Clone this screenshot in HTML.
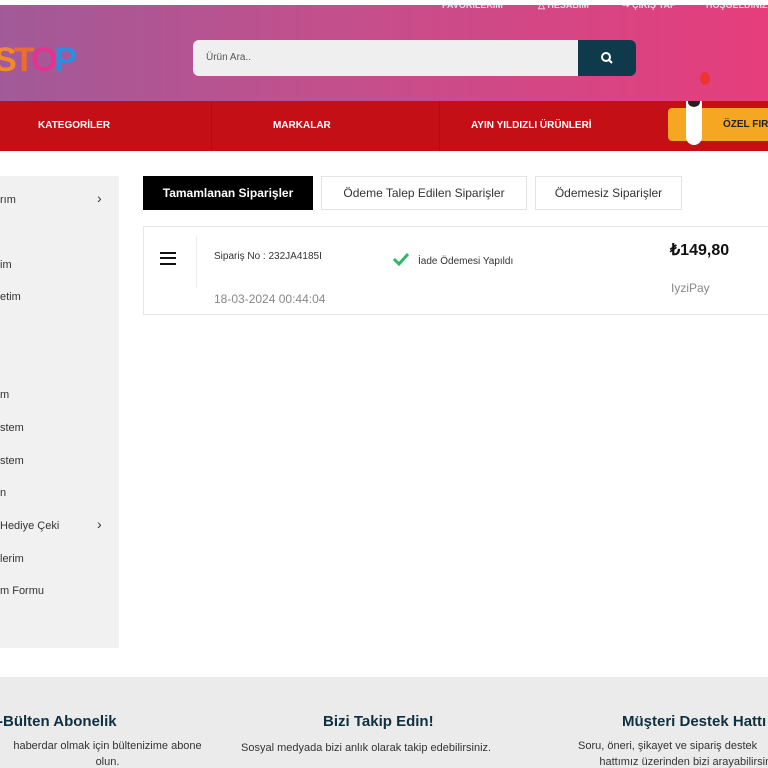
<!DOCTYPE html><html><head><meta charset="utf-8"><style>
*{margin:0;padding:0;box-sizing:border-box}
html,body{width:768px;height:768px;overflow:hidden}
body{background:#fff;font-family:"Liberation Sans",sans-serif;color:#222}
#w{position:relative;width:768px;height:768px;overflow:hidden}
.a{position:absolute;white-space:nowrap}
.hdr{position:absolute;left:0;top:5px;width:768px;height:96px;overflow:hidden;background:linear-gradient(90deg,#a15a98 0%,#c44f8c 45%,#e63d7c 100%)}
.nav{position:absolute;left:0;top:101px;width:768px;height:50px;overflow:hidden;background:#c40f16}
.nav .a{color:#fff;font-weight:bold;font-size:10px;top:19px}
.sep{position:absolute;top:0;width:1px;height:50px;background:#b00c12}
.side{position:absolute;left:0;top:176px;width:119px;height:472px;background:#f1f1f1}
.side .a{font-size:11px;color:#333;left:0}
.tab{position:absolute;top:176px;height:34px;border:1px solid #e4e4e4;font-size:12px;text-align:center;line-height:32px;color:#333}
.foot{position:absolute;left:0;top:677px;width:768px;height:91px;overflow:hidden;background:#ebebeb}
.foot h3{position:absolute;font-size:15px;color:#0e3040;white-space:nowrap}
.foot p{position:absolute;font-size:11px;color:#333;text-align:center;line-height:16px;white-space:nowrap}
</style></head><body><div id="w">
<div class="hdr">
<div class="a" style="left:442px;top:-5px;font-size:9px;color:#f3d6e6;font-weight:bold">FAVORİLERİM</div>
<div class="a" style="left:538px;top:-5px;font-size:9px;color:#f3d6e6;font-weight:bold">△ HESABIM</div>
<div class="a" style="left:622px;top:-5px;font-size:9px;color:#f3d6e6;font-weight:bold">⇢ ÇIKIŞ YAP</div>
<div class="a" style="left:706px;top:-5px;font-size:9px;color:#f3d6e6;font-weight:bold">HOŞGELDİNİZ</div>
<div class="a" style="left:-6px;top:36px;font-size:34px;font-weight:bold;letter-spacing:-3px"><span style="color:#f28a2b">S</span><span style="color:#ef6d2a">T</span><span style="color:#e0348f">O</span><span style="color:#2b8ee0">P</span></div>
<div class="a" style="left:193px;top:35px;width:386px;height:36px;background:#efefef;border-radius:6px 0 0 6px;font-size:10px;color:#555;padding:12px 13px">Ürün Ara..</div>
<div class="a" style="left:578px;top:35px;width:58px;height:36px;background:#0f3a4c;border-radius:0 6px 6px 0"><svg width="58" height="36"><circle cx="28" cy="17" r="4" stroke="#fff" stroke-width="2" fill="none"/><path d="M31 20l3 3" stroke="#fff" stroke-width="2"/></svg></div>
<div class="a" style="left:700px;top:67px;width:10px;height:13px;border-radius:50%;background:#e33"></div>
</div>
<div class="nav">
<div class="a" style="left:38px">KATEGORİLER</div>
<div class="sep" style="left:211px"></div>
<div class="a" style="left:273px">MARKALAR</div>
<div class="sep" style="left:439px"></div>
<div class="a" style="left:471px">AYIN YILDIZLI ÜRÜNLERİ</div>
<div class="a" style="left:668px;top:7px;width:110px;height:33px;background:#f5a623;border-radius:4px;color:#222;padding:11px 0 0 55px">ÖZEL FIRSATLAR</div>
<div class="a" style="left:686px;top:-6px;width:16px;height:50px;background:#fff;border-radius:8px"></div>
<div class="a" style="left:688px;top:-4px;width:12px;height:10px;background:#222;border-radius:50%"></div>
</div>
<div class="side">
<div class="a" style="top:18px">rım</div><div class="a" style="left:97px;top:14px;font-size:14px">›</div>
<div class="a" style="top:83px">im</div>
<div class="a" style="top:115px">etim</div>
<div class="a" style="top:213px">m</div>
<div class="a" style="top:246px">stem</div>
<div class="a" style="top:279px">stem</div>
<div class="a" style="top:311px">n</div>
<div class="a" style="top:344px">Hediye Çeki</div><div class="a" style="left:97px;top:340px;font-size:14px">›</div>
<div class="a" style="top:377px">lerim</div>
<div class="a" style="top:409px">m Formu</div>
</div>
<div class="tab" style="left:143px;width:170px;background:#000;color:#fff;font-weight:bold;border-color:#000">Tamamlanan Siparişler</div>
<div class="tab" style="left:321px;width:206px">Ödeme Talep Edilen Siparişler</div>
<div class="tab" style="left:535px;width:147px">Ödemesiz Siparişler</div>
<div class="a" style="left:143px;top:226px;width:640px;height:89px;border:1px solid #e6e6e6"></div>
<div class="a" style="left:196px;top:236px;width:1px;height:52px;background:#eee"></div>
<div class="a" style="left:160px;top:252px;width:16px;height:13px;border-top:2.5px solid #111;border-bottom:2.5px solid #111"><div style="margin-top:2.5px;height:2.5px;background:#111"></div></div>
<div class="a" style="left:214px;top:251px;font-size:10px;color:#333">Sipariş No : 232JA4185I</div>
<div class="a" style="left:214px;top:292px;font-size:12px;color:#888">18-03-2024 00:44:04</div>
<svg class="a" style="left:392px;top:252px" width="18" height="14"><path d="M2 7l5 5 9-10" stroke="#2fb86a" stroke-width="3" fill="none"/></svg>
<div class="a" style="left:418px;top:256px;font-size:10px;color:#333">İade Ödemesi Yapıldı</div>
<div class="a" style="left:670px;top:240px;font-size:16px;font-weight:bold;color:#111">₺149,80</div>
<div class="a" style="left:671px;top:281px;font-size:12px;color:#888">IyziPay</div>
<div class="foot">
<h3 style="left:-2px;top:36px">-Bülten Abonelik</h3>
<p style="left:0;top:61px;width:215px">haberdar olmak için bültenizime abone<br>olun.</p>
<h3 style="left:323px;top:36px">Bizi Takip Edin!</h3>
<p style="left:241px;top:63px">Sosyal medyada bizi anlık olarak takip edebilirsiniz.</p>
<h3 style="left:622px;top:36px">Müşteri Destek Hattı</h3>
<p style="left:578px;top:61px;text-align:left">Soru, öneri, şikayet ve sipariş destek<br>&nbsp;&nbsp;&nbsp;&nbsp;&nbsp;&nbsp;&nbsp;hattımız üzerinden bizi arayabilirsiniz</p>
</div>
</div></body></html>
